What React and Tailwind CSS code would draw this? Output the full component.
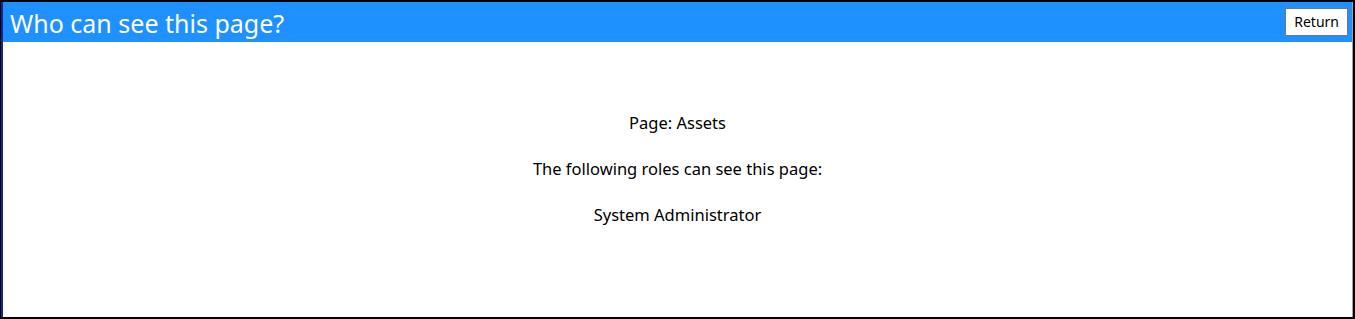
export default function App() {
  return (
    <div
      className="w-[1355px] h-[319px] border-t-2 border-b-2 border-l border-r-2 border-black bg-white"
      style={{ fontFamily: '"Segoe UI", "Noto Sans", "Open Sans", sans-serif' }}
    >
      <div className="h-full flex flex-col border-l-2 border-[#0b2a8a] border-r border-r-[#a0a0a0]">
        <div className="h-[40px] bg-[#1e90ff] flex items-center justify-between pl-[7px] pr-[4px]">
          <h1 className="text-white text-[25px] leading-none pt-[3px]">Who can see this page?</h1>
          <button className="bg-white border border-[#767676] text-[14px] text-black h-[28px] px-[8px] leading-none">
            Return
          </button>
        </div>
        <div className="flex-1 flex flex-col items-center pt-[70px] gap-[24px] text-[16.5px] text-black leading-[22px]">
          <p>Page: Assets</p>
          <p>The following roles can see this page:</p>
          <p>System Administrator</p>
        </div>
      </div>
    </div>
  );
}
